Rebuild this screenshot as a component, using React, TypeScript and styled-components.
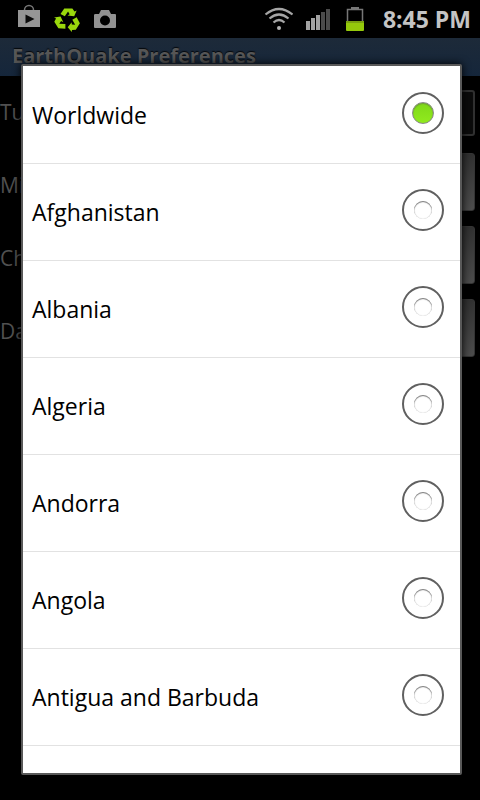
import React, { useState } from "react";
import styled, { createGlobalStyle } from "styled-components";

const GlobalStyle = createGlobalStyle`
  * { box-sizing: border-box; }
  html, body { margin: 0; background: #000; }
  body { font-family: "Open Sans", "Noto Sans", sans-serif; overflow: hidden; }
`;

const Screen = styled.div`
  position: relative;
  min-height: 100vh;
  background: #000;
`;

const StatusBar = styled.header`
  display: flex;
  align-items: center;
  justify-content: space-between;
  height: 38px;
  padding: 0 9px 0 16px;
`;

const Notices = styled.div`
  display: flex;
  gap: 10px;
`;

const Indicators = styled.div`
  display: flex;
  align-items: center;
  gap: 12px;
`;

const Icon = styled.svg`
  display: block;
  height: 38px;
`;

const Clock = styled.time`
  margin-left: 4px;
  color: #c4c4c4;
  font-size: 23px;
  font-weight: 700;
  line-height: 38px;
  white-space: nowrap;
`;

const TitleBar = styled.h1`
  height: 38px;
  margin: 0;
  padding: 0 12px;
  background: linear-gradient(#1d2a39, #15263b);
  color: #565656;
  font-size: 20px;
  font-weight: 700;
  line-height: 36px;
  text-shadow: 0 -1px 1px #05080c;
`;

const Preferences = styled.main`
  display: flex;
  flex-direction: column;
  margin-top: -4px;
`;

const Preference = styled.div`
  display: flex;
  align-items: center;
  justify-content: space-between;
  height: 73px;
  padding-right: 5px;
`;

const PreferenceName = styled.label`
  padding-top: 6px;
  color: #505050;
  font-size: 21px;
`;

const PreferenceButton = styled.button`
  width: 180px;
  height: 58px;
  border: 1px solid #343434;
  border-radius: 3px;
  background: linear-gradient(#303030, #4c4c4c);
`;

const Field = styled.input`
  width: 180px;
  height: 46px;
  margin-top: 8px;
  border: 2px solid #303030;
  border-radius: 3px;
  background: #0b0b0b;
`;

const Dialog = styled.div`
  position: absolute;
  inset: 64px 18px 25px 21px;
  overflow: hidden;
  border: 2px solid #595959;
  border-radius: 2px;
  background: #fff;
  box-shadow: 0 0 8px #000;
`;

const Options = styled.fieldset`
  margin: 0;
  padding: 1px 0 0;
  border: 0;
`;

const Option = styled.label`
  display: flex;
  align-items: center;
  justify-content: space-between;
  height: 97px;
  padding: 0 16px 4px 9px;
  border-bottom: 1px solid #e2e2e2;
  color: #000;
  font-size: 23px;
  line-height: 32px;
`;

const OptionName = styled.span`
  padding-top: 4px;
`;

const Radio = styled.input`
  display: grid;
  flex: none;
  place-items: center;
  width: 42px;
  height: 42px;
  margin: 0;
  appearance: none;
  border: 2px solid #606060;
  border-radius: 50%;
  background: #fff;

  &::after {
    content: "";
    width: 18px;
    height: 18px;
    border-radius: 50%;
    background: #fff;
    box-shadow: inset 0 1px 1px #777, inset 0 0 1px #bbb;
  }

  &:checked::after {
    width: 20px;
    height: 20px;
    border: 1px solid #888;
    background: linear-gradient(#7fd918, #91ea1e);
    box-shadow: inset 0 1px 1px #6c9c35;
  }
`;

const places = [
  "Worldwide",
  "Afghanistan",
  "Albania",
  "Algeria",
  "Andorra",
  "Angola",
  "Antigua and Barbuda",
];

const StoreIcon = () => (
  <Icon width="28" viewBox="16 0 28 38" aria-hidden="true">
    <path d="M24.500 12v-2a4.500 4.500 0 0 1 9 0v2" fill="none" stroke="#777" strokeWidth="1.500" />
    <path d="M18 10h22v17H18z" fill="#969696" />
    <path d="M25.500 14.500v9l9-4.500z" fill="#0b0b0b" />
  </Icon>
);

const arrow = "M-6.500-6L-3-11.500H4.500L6.500-8.500L8.500-9.500L6.200-3.800L0-4.500L2-5.700L.500-8.500L-2.500-3.700Z";

const RecycleIcon = () => (
  <Icon width="28" viewBox="54 0 28 38" aria-hidden="true">
    <g fill="#9ad80c" transform="translate(67.500 20) scale(1.080 1)">
      <path d={arrow} />
      <path d={arrow} transform="rotate(120)" />
      <path d={arrow} transform="rotate(240)" />
    </g>
  </Icon>
);

const CameraIcon = () => (
  <Icon width="26" viewBox="92 0 26 38" aria-hidden="true">
    <path d="M95.500 14H99l2-4h8l2 4h4q1 0 1 1v12q0 1-1 1H95q-1 0-1-1V15q0-1 1.500-1z" fill="#929292" />
    <circle cx="105" cy="20.500" r="5" fill="#000" />
  </Icon>
);

const WifiIcon = () => (
  <Icon width="30" viewBox="263 0 30 38" aria-hidden="true">
    <g fill="none" stroke="#a5a5a5" strokeWidth="2.200">
      <path d="M265.500 14.500q13.500-11 27 0" />
      <path d="M269.500 18.500q9.500-8 19 0" />
      <path d="M273.500 22.500q5.500-5 11 0" />
    </g>
    <circle cx="279" cy="28" r="2" fill="#b5b5b5" />
  </Icon>
);

const SignalIcon = () => (
  <Icon width="26" viewBox="305 0 26 38" aria-hidden="true">
    <g fill="#a2a2a2">
      <path d="M306 21h4v9h-4z" />
      <path d="M311 18h4v12h-4z" />
      <path d="M316 15h4v15h-4z" />
    </g>
    <g fill="#4b4b4b">
      <path d="M321 12h4v18h-4z" />
      <path d="M326 9h4v21h-4z" />
    </g>
  </Icon>
);

const BatteryIcon = () => (
  <Icon width="24" viewBox="343 0 24 38" aria-hidden="true">
    <path d="M351 7h8v2h-8z" fill="#777" />
    <path d="M347.500 22V9.500h15V22" fill="none" stroke="#777" strokeWidth="1.500" />
    <path d="M346 21h18v9q0 1-1 1h-16q-1 0-1-1z" fill="#95c90b" />
    <path d="M346 21h18v2h-18z" fill="#7ba211" />
  </Icon>
);

export default function App() {
  const [place, setPlace] = useState("Worldwide");
  return (
    <Screen>
      <GlobalStyle />
      <StatusBar>
        <Notices>
          <StoreIcon />
          <RecycleIcon />
          <CameraIcon />
        </Notices>
        <Indicators>
          <WifiIcon />
          <SignalIcon />
          <BatteryIcon />
          <Clock>8:45 PM</Clock>
        </Indicators>
      </StatusBar>
      <TitleBar>EarthQuake Preferences</TitleBar>
      <Preferences>
        <Preference>
          <PreferenceName htmlFor="tu">Tu</PreferenceName>
          <Field id="tu" />
        </Preference>
        {["Mi", "Ch", "Da"].map((name) => (
          <Preference key={name}>
            <PreferenceName htmlFor={name}>{name}</PreferenceName>
            <PreferenceButton id={name} type="button" />
          </Preference>
        ))}
      </Preferences>
      <Dialog role="dialog" aria-modal="true" aria-label="Place">
        <Options>
          {places.map((name) => (
            <Option key={name}>
              <OptionName>{name}</OptionName>
              <Radio
                type="radio"
                name="place"
                value={name}
                checked={place === name}
                onChange={() => setPlace(name)}
              />
            </Option>
          ))}
        </Options>
      </Dialog>
    </Screen>
  );
}
